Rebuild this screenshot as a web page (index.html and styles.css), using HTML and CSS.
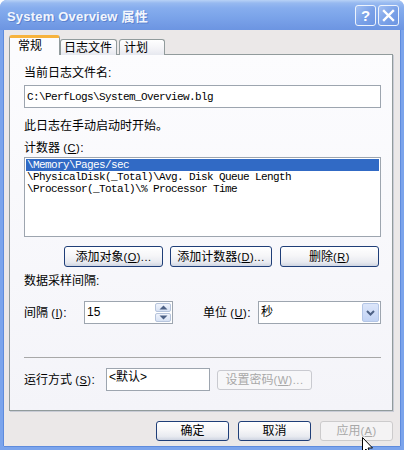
FILE: index.html
```html
<!DOCTYPE html>
<html>
<head>
<meta charset="utf-8">
<link rel="stylesheet" href="styles.css">
</head>
<body>
<div class="window">
  <div class="titlebar">
    <span class="title">System Overview 属性</span>
    <div class="tbtns">
      <div class="tbtn help">?</div>
      <div class="tbtn close">
        <svg width="13" height="13" viewBox="0 0 13 13"><path d="M2 2 L11 11 M11 2 L2 11" stroke="#fff" stroke-width="2.4" stroke-linecap="square"/></svg>
      </div>
    </div>
  </div>
  <div class="client">
    <div class="tabs">
      <div class="tab active">常规</div>
      <div class="tab">日志文件</div>
      <div class="tab">计划</div>
    </div>
    <div class="panel">
      <div class="lbl l1">当前日志文件名:</div>
      <div class="field filebox"><span class="mono">C:\PerfLogs\System_Overview.blg</span></div>
      <div class="lbl l2">此日志在手动启动时开始。</div>
      <div class="lbl l3">计数器 <span class="acc">(<u>C</u>)</span>:</div>
      <div class="field listbox">
        <div class="item sel mono">\Memory\Pages/sec</div>
        <div class="item mono">\PhysicalDisk(_Total)\Avg. Disk Queue Length</div>
        <div class="item mono">\Processor(_Total)\% Processor Time</div>
      </div>
      <div class="btnrow">
        <div class="btn b1">添加对象 <span class="acc">(<u>O</u>)...</span></div>
        <div class="btn b2">添加计数器 <span class="acc">(<u>D</u>)...</span></div>
        <div class="btn b3">删除 <span class="acc">(<u>R</u>)</span></div>
      </div>
      <div class="lbl l4">数据采样间隔:</div>
      <div class="irow">
        <div class="lbl ilbl">间隔 <span class="acc">(<u>I</u>)</span>:</div>
        <div class="field spinbox">
          <span class="val">15</span>
          <div class="spin">
            <div class="sbtn"><svg width="9" height="5" viewBox="0 0 9 5"><path d="M0.5 4.5 L4.5 0.5 L8.5 4.5 Z" fill="#4D6185"/></svg></div>
            <div class="sbtn"><svg width="9" height="5" viewBox="0 0 9 5"><path d="M0.5 0.5 L4.5 4.5 L8.5 0.5 Z" fill="#4D6185"/></svg></div>
          </div>
        </div>
        <div class="lbl ulbl">单位 <span class="acc">(<u>U</u>)</span>:</div>
        <div class="field combo">
          <span class="val">秒</span>
          <div class="dd"><svg width="9" height="6" viewBox="0 0 9 6"><path d="M1 1 L4.5 4.5 L8 1" stroke="#4D6185" stroke-width="2" fill="none"/></svg></div>
        </div>
      </div>
      <div class="sep"></div>
      <div class="rrow">
        <div class="lbl rlbl">运行方式 <span class="acc">(<u>S</u>)</span>:</div>
        <div class="field runbox"><span class="val">&lt;默认&gt;</span></div>
        <div class="btn dis pwd">设置密码 <span class="acc">(<u>W</u>)...</span></div>
      </div>
    </div>
    <div class="footer">
      <div class="btn fbtn">确定</div>
      <div class="btn fbtn">取消</div>
      <div class="btn fbtn dis">应用 <span class="acc">(<u>A</u>)</span></div>
    </div>
  </div>
</div>
<svg class="cursor" width="12" height="19" viewBox="0 0 12 19"><path d="M0.5 0.5 L0.5 15.5 L4 12 L6.5 17.5 L8.5 16.5 L6 11 L10.5 11 Z" fill="#fff" stroke="#000" stroke-width="1"/></svg>
</body>
</html>
```
FILE: styles.css
```css
* { box-sizing: border-box; }
html, body { margin: 0; padding: 0; background: #fff; }
body {
  width: 404px; height: 450px; overflow: hidden; position: relative;
  font-family: "Liberation Sans", "Noto Sans CJK SC", sans-serif;
  font-size: 12px; color: #000;
}
.window {
  width: 404px; height: 450px;
  display: flex; flex-direction: column;
  background: #7BA4EC;
  border-radius: 7px 7px 0 0;
  overflow: hidden;
}
.titlebar {
  height: 30px; flex: none;
  display: flex; align-items: center; justify-content: space-between;
  padding: 0 5px 0 7px;
  background: linear-gradient(#B8D2F6 0px, #97B9F0 3px, #86ADEE 8px, #7CA5EA 16px, #7199E4 26px, #6C95E2 30px);
}
.title {
  color: #F2F6FD; font-weight: bold; font-size: 13px; letter-spacing: 0.2px;
  text-shadow: 1px 1px 0 #5B82CF;
  padding-top: 1px;
}
.tbtns { display: flex; gap: 2px; margin-top: 1px; }
.tbtn {
  width: 21px; height: 21px;
  border: 1px solid #EDF3FC; border-radius: 3px;
  background: linear-gradient(135deg, #A3C0F2, #7BA2E8 50%, #6C95E2);
  display: flex; align-items: center; justify-content: center;
  color: #fff; font-weight: bold; font-size: 15px; font-family: "Liberation Sans", sans-serif;
}
.client {
  flex: 1;
  margin: 0 4px 4px 4px;
  background: #EBE8E8;
  padding: 5px 7px 0 5px;
  display: flex; flex-direction: column;
  box-shadow: -1px 0 0 #5E8BDD, 1px 0 0 #5E8BDD, 0 1px 0 #5E8BDD;
}
.tabs { display: flex; align-items: flex-end; height: 20px; margin-bottom: -1px; position: relative; z-index: 2; }
.tab {
  height: 16px; padding: 0 4px;
  border: 1px solid #919B9C; border-bottom: none;
  border-radius: 3px 3px 0 0;
  background: linear-gradient(#FFFFFF, #F3F3F7 60%, #E6E8EF);
  display: flex; align-items: center;
  margin-left: 1px;
  line-height: 14px;
  white-space: nowrap;
}
.tab:nth-child(2) { width: 57px; margin-left: 0; padding: 0 3px; }
.tab:nth-child(3) { width: 46px; margin-left: 2px; }
.tab.active {
  width: 51px; height: 20px; margin-left: 0;
  background: #FCFCFE;
  border-top: 3px solid #F7B33D;
  padding-left: 8px;
  padding-bottom: 1px;
}
.panel {
  height: 357px; flex: none;
  border: 1px solid #919B9C;
  box-shadow: 1px 1px 0 #C9CCD6;
  background: linear-gradient(#FCFCFE, #F4F4F9);
  padding: 11px 11px 0 14px;
  display: flex; flex-direction: column;
  position: relative; z-index: 1;
}
.lbl { height: 14px; line-height: 14px; white-space: nowrap; }
.acc { font-size: 11px; letter-spacing: 0.5px; }
.l2 { margin-top: 11px; }
.l3 { margin-top: 8px; }
.l4 { margin-top: 7px; }
.field { border: 1px solid #9DA5AF; background: #fff; }
.mono { font-family: "Liberation Mono", monospace; font-size: 11px; letter-spacing: -0.6px; }
.filebox { margin-top: 5px; height: 23px; padding: 4px 0 0 2px; line-height: 13px; }
.listbox { margin-top: 2px; height: 80px; padding: 1px 1px; }
.item { height: 12px; line-height: 12px; padding-left: 1px; white-space: nowrap; }
.item.sel { background: #316AC5; color: #fff; }
.btnrow { display: flex; margin-top: 9px; margin-left: 40px; gap: 7px; }
.btn {
  height: 21px;
  border: 1px solid #1F3E78; border-radius: 3px;
  background: linear-gradient(#FFFFFF, #F6F6F8 45%, #E8EAF0 80%, #CFD5E2);
  display: flex; align-items: center; justify-content: center;
  white-space: nowrap; line-height: 14px;
}
.b1 { width: 99px; }
.b2 { width: 102px; }
.b3 { width: 99px; margin-left: 1px; }
.irow { display: flex; align-items: center; margin-top: 13px; height: 23px; }
.ilbl { width: 60px; }
.spinbox { width: 89px; height: 23px; display: flex; justify-content: space-between; padding: 1px 1px 1px 2px; }
.val { line-height: 14px; padding-top: 2px; }
.spin { display: flex; flex-direction: column; gap: 1px; }
.sbtn {
  width: 16px; height: 10px;
  border: 1px solid #B6C4DC; border-radius: 2px;
  background: linear-gradient(#F0F4FC, #D8E2F4);
  display: flex; align-items: center; justify-content: center;
}
.ulbl { width: 55px; margin-left: 30px; }
.combo { flex: 1; height: 23px; display: flex; justify-content: space-between; padding: 1px 1px 1px 2px; }
.dd {
  width: 17px; height: 19px;
  border: 1px solid #B4C6E6; border-radius: 2px;
  background: linear-gradient(#DCE6FA, #C2D3F4);
  display: flex; align-items: center; justify-content: center;
}
.sep { margin-top: 33px; height: 1px; background: #A8A8A8; }
.rrow { display: flex; align-items: flex-start; margin-top: 10px; }
.rlbl { width: 82px; margin-top: 5px; }
.runbox { width: 104px; height: 23px; padding: 1px 0 0 2px; }
.dis { border-color: #C9CAD0; color: #A8A8A8; background: #F7F7F9; }
.pwd { width: 95px; height: 20px; margin-left: 7px; margin-top: 2px; }
.footer { display: flex; justify-content: flex-end; gap: 9px; margin-top: 10px; }
.fbtn { width: 73px; height: 20px; }
.footer .dis { background: #F4F3F4; border-color: #CCCBCC; }
.cursor { position: absolute; left: 362px; top: 437px; }
```
